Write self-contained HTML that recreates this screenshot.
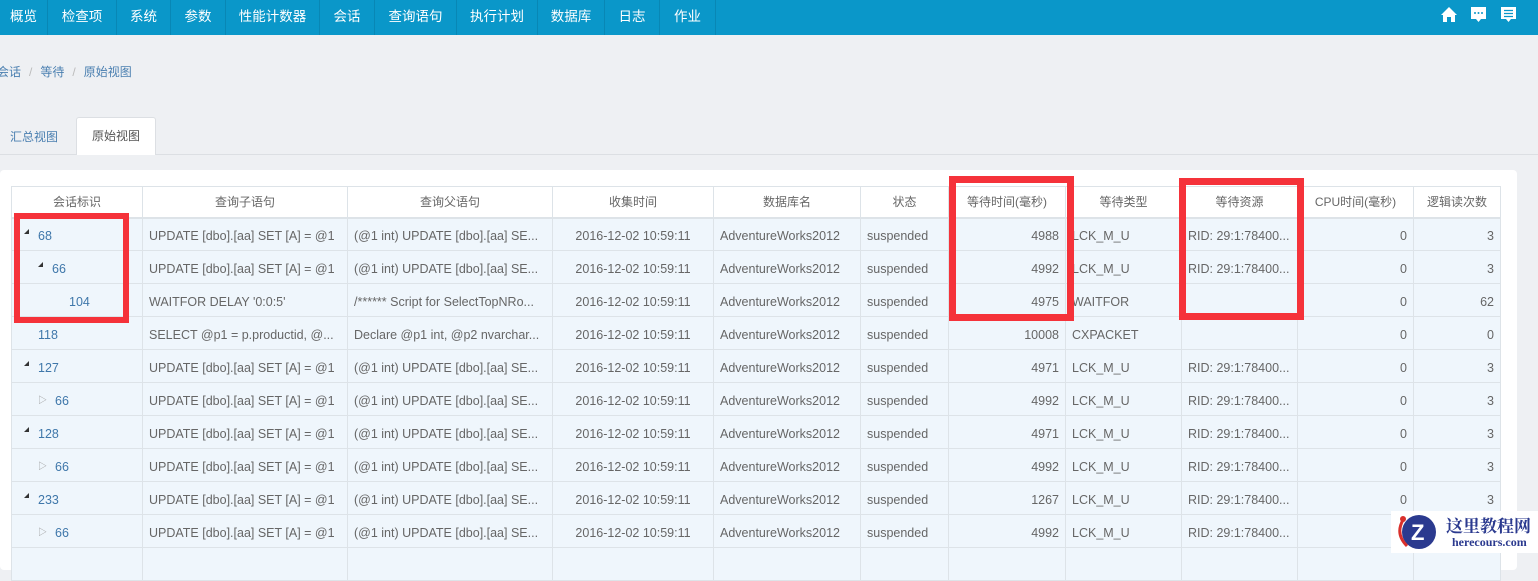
<!DOCTYPE html>
<html><head><meta charset="utf-8"><style>
*{margin:0;padding:0;box-sizing:border-box}
body{width:1538px;height:553px;overflow:hidden;background:#eef0f3;font-family:"Liberation Sans","Noto Sans CJK SC",sans-serif;font-size:12.5px;color:#666;position:relative}
.nav{position:absolute;left:0;top:0;width:1538px;height:35px;background:#0a97c9;display:flex}
.nav div{color:#fff;font-size:13.5px;line-height:33px;text-align:center;border-right:1px solid #0887b5;white-space:nowrap}
.bc{position:absolute;left:-3px;top:63px;font-size:12px;color:#4a7fb0}
.bc span{color:#bbb;margin:0 8px}
.tabs{position:absolute;left:0;top:154px;width:1538px;border-top:1px solid #dcdfe3}
.tab1{position:absolute;left:10px;top:128px;font-size:12px;color:#4a7fb0}
.tab2{position:absolute;left:76px;top:117px;width:80px;height:38px;background:#fff;border-radius:3px 3px 0 0;border:1px solid #dcdfe3;border-bottom:none;font-size:12px;color:#555;text-align:center;line-height:36px}
.panel{position:absolute;left:0;top:170px;width:1517px;height:400px;background:#fff;border-radius:4px}
table{position:absolute;left:11px;top:186px;width:1489px;border-collapse:collapse;table-layout:fixed}
td,th{border:1px solid #dde3e8;height:33px;white-space:nowrap;overflow:hidden;padding:0 6px}
th{font-weight:normal;height:31px;text-align:center;color:#666;border-bottom:2px solid #dde3e8;font-size:12px}
td{background:#eff6fc;padding-top:3px}
.c{text-align:center}.r{text-align:right}
.id{color:#3f77aa}
.tri{display:inline-block;width:0;height:0;border-left:5px solid transparent;border-bottom:5px solid #333;vertical-align:6px;margin-right:9px;margin-left:6px}
.otri{display:inline-block;color:#999;font-size:9px;margin-right:8px;vertical-align:2px}
.box{position:absolute;border:6px solid #f5323a}
</style></head><body>
<div class="nav"><div style="width:48px">概览</div><div style="width:69px">检查项</div><div style="width:54px">系统</div><div style="width:55px">参数</div><div style="width:94px">性能计数器</div><div style="width:55px">会话</div><div style="width:82px">查询语句</div><div style="width:81px">执行计划</div><div style="width:67px">数据库</div><div style="width:55px">日志</div><div style="width:56px">作业</div></div>
<svg style="position:absolute;left:1440px;top:6px" width="92" height="20" viewBox="0 0 92 20">
<path d="M1 9 L9 1 L17 9 L15 9 L15 16 L11 16 L11 11 L7 11 L7 16 L3 16 L3 9Z" fill="#fff"/>
<path d="M31 1 H46 V13 H41 L38.5 16 L36 13 H31Z" fill="#fff"/><circle cx="35" cy="7" r="1" fill="#0a97c9"/><circle cx="38.5" cy="7" r="1" fill="#0a97c9"/><circle cx="42" cy="7" r="1" fill="#0a97c9"/>
<path d="M61 1 H76 V13 H71 L68.5 16 L66 13 H61Z" fill="#fff"/><path d="M64 4.5H73M64 7.5H73M64 10.5H73" stroke="#0a97c9" stroke-width="1.3"/>
</svg>
<div class="bc">会话<span>/</span>等待<span>/</span>原始视图</div>
<div class="tabs"></div>
<div class="tab1">汇总视图</div>
<div class="tab2">原始视图</div>
<div class="panel"></div>
<table>
<colgroup><col style="width:131px"><col style="width:205px"><col style="width:205px"><col style="width:161px"><col style="width:147px"><col style="width:88px"><col style="width:117px"><col style="width:116px"><col style="width:116px"><col style="width:116px"><col style="width:87px"></colgroup>
<tr><th>会话标识</th><th>查询子语句</th><th>查询父语句</th><th>收集时间</th><th>数据库名</th><th>状态</th><th>等待时间(毫秒)</th><th>等待类型</th><th>等待资源</th><th>CPU时间(毫秒)</th><th>逻辑读次数</th></tr>
<tr><td class="id"><span class="tri"></span>68</td><td>UPDATE [dbo].[aa] SET [A] = @1</td><td>(@1 int) UPDATE [dbo].[aa] SE...</td><td class="c">2016-12-02 10:59:11</td><td>AdventureWorks2012</td><td>suspended</td><td class="r">4988</td><td>LCK_M_U</td><td>RID: 29:1:78400...</td><td class="r">0</td><td class="r">3</td></tr>
<tr><td class="id" style="padding-left:20px"><span class="tri"></span>66</td><td>UPDATE [dbo].[aa] SET [A] = @1</td><td>(@1 int) UPDATE [dbo].[aa] SE...</td><td class="c">2016-12-02 10:59:11</td><td>AdventureWorks2012</td><td>suspended</td><td class="r">4992</td><td>LCK_M_U</td><td>RID: 29:1:78400...</td><td class="r">0</td><td class="r">3</td></tr>
<tr><td class="id" style="padding-left:57px">104</td><td>WAITFOR DELAY '0:0:5'</td><td>/****** Script for SelectTopNRo...</td><td class="c">2016-12-02 10:59:11</td><td>AdventureWorks2012</td><td>suspended</td><td class="r">4975</td><td>WAITFOR</td><td></td><td class="r">0</td><td class="r">62</td></tr>
<tr><td class="id" style="padding-left:26px">118</td><td>SELECT @p1 = p.productid, @...</td><td>Declare @p1 int, @p2 nvarchar...</td><td class="c">2016-12-02 10:59:11</td><td>AdventureWorks2012</td><td>suspended</td><td class="r">10008</td><td>CXPACKET</td><td></td><td class="r">0</td><td class="r">0</td></tr>
<tr><td class="id"><span class="tri"></span>127</td><td>UPDATE [dbo].[aa] SET [A] = @1</td><td>(@1 int) UPDATE [dbo].[aa] SE...</td><td class="c">2016-12-02 10:59:11</td><td>AdventureWorks2012</td><td>suspended</td><td class="r">4971</td><td>LCK_M_U</td><td>RID: 29:1:78400...</td><td class="r">0</td><td class="r">3</td></tr>
<tr><td class="id" style="padding-left:26px"><span class="otri">▷</span>66</td><td>UPDATE [dbo].[aa] SET [A] = @1</td><td>(@1 int) UPDATE [dbo].[aa] SE...</td><td class="c">2016-12-02 10:59:11</td><td>AdventureWorks2012</td><td>suspended</td><td class="r">4992</td><td>LCK_M_U</td><td>RID: 29:1:78400...</td><td class="r">0</td><td class="r">3</td></tr>
<tr><td class="id"><span class="tri"></span>128</td><td>UPDATE [dbo].[aa] SET [A] = @1</td><td>(@1 int) UPDATE [dbo].[aa] SE...</td><td class="c">2016-12-02 10:59:11</td><td>AdventureWorks2012</td><td>suspended</td><td class="r">4971</td><td>LCK_M_U</td><td>RID: 29:1:78400...</td><td class="r">0</td><td class="r">3</td></tr>
<tr><td class="id" style="padding-left:26px"><span class="otri">▷</span>66</td><td>UPDATE [dbo].[aa] SET [A] = @1</td><td>(@1 int) UPDATE [dbo].[aa] SE...</td><td class="c">2016-12-02 10:59:11</td><td>AdventureWorks2012</td><td>suspended</td><td class="r">4992</td><td>LCK_M_U</td><td>RID: 29:1:78400...</td><td class="r">0</td><td class="r">3</td></tr>
<tr><td class="id"><span class="tri"></span>233</td><td>UPDATE [dbo].[aa] SET [A] = @1</td><td>(@1 int) UPDATE [dbo].[aa] SE...</td><td class="c">2016-12-02 10:59:11</td><td>AdventureWorks2012</td><td>suspended</td><td class="r">1267</td><td>LCK_M_U</td><td>RID: 29:1:78400...</td><td class="r">0</td><td class="r">3</td></tr>
<tr><td class="id" style="padding-left:26px"><span class="otri">▷</span>66</td><td>UPDATE [dbo].[aa] SET [A] = @1</td><td>(@1 int) UPDATE [dbo].[aa] SE...</td><td class="c">2016-12-02 10:59:11</td><td>AdventureWorks2012</td><td>suspended</td><td class="r">4992</td><td>LCK_M_U</td><td>RID: 29:1:78400...</td><td class="r">0</td><td class="r">3</td></tr>
<tr><td></td><td></td><td></td><td></td><td></td><td></td><td></td><td></td><td></td><td></td><td></td></tr>
</table>
<div class="box" style="left:14px;top:213px;width:115px;height:110px"></div>
<div class="box" style="left:949px;top:176px;width:125px;height:145px;border-width:7px"></div>
<div class="box" style="left:1179px;top:178px;width:125px;height:142px;border-width:7px"></div>
<div style="position:absolute;left:1391px;top:511px;width:147px;height:42px;background:#fff"></div>
<svg style="position:absolute;left:1393px;top:512px" width="50" height="40"><circle cx="26" cy="20" r="17" fill="#2b3a8f"/><path d="M10 8 Q2 22 14 34" stroke="#d9302c" stroke-width="3" fill="none"/><circle cx="10" cy="7" r="3" fill="#d9302c"/><text x="18" y="28" fill="#fff" font-size="22" font-weight="bold" font-family="Liberation Sans">Z</text></svg>
<div style="position:absolute;left:1446px;top:512px;font-family:'Liberation Serif','Noto Serif CJK SC',serif;font-weight:bold;font-size:17px;color:#2b3a8f;white-space:nowrap">这里教程网</div>
<div style="position:absolute;left:1452px;top:535px;font-family:'Liberation Serif',serif;font-weight:bold;font-size:12px;color:#2b3a8f">herecours.com</div>
</body></html>
